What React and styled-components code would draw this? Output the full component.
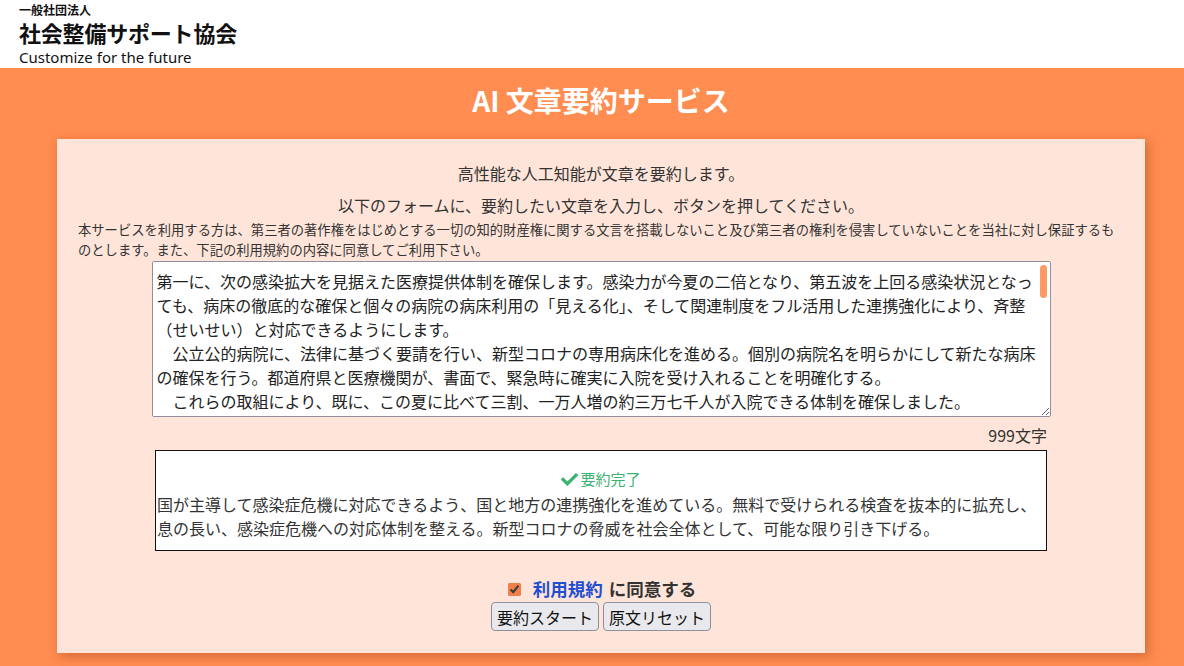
import React from "react";
import styled, { createGlobalStyle } from "styled-components";
import { FaCheck } from "react-icons/fa";

const Global = createGlobalStyle`
  html, body { margin: 0; padding: 0; }
  body {
    font-family: "Noto Sans CJK JP", "Noto Sans", sans-serif;
    color: #333;
    background: #ff8c50;
  }
  * { box-sizing: border-box; }
`;

const Header = styled.header`
  height: 68px;
  background: #fff;
  padding: 3px 0 0 19px;
  display: flex;
  flex-direction: column;
  color: #111;
`;

const OrgType = styled.div`
  font-size: 12px;
  font-weight: 700;
  line-height: 14px;
`;

const OrgName = styled.div`
  font-size: 22px;
  font-weight: 700;
  line-height: 30px;
  letter-spacing: -0.2px;
`;

const Tagline = styled.div`
  font-family: "Noto Sans", "Noto Sans CJK JP", sans-serif;
  font-size: 15px;
  line-height: 21px;
`;

const Main = styled.main`
  background: #ff8c50;
  min-height: 598px;
  padding: 13px 0 12px 18px;
`;

const Title = styled.h1`
  margin: 0 0 20px;
  text-align: center;
  color: #fff;
  font-size: 28px;
  line-height: 38px;
  font-weight: 700;
`;

const Card = styled.section`
  width: 1088px;
  margin: 0 auto;
  background: #ffe5d9;
  box-shadow: 3px 3px 10px rgba(120, 40, 0, 0.35);
  padding: 22px 21px 22px;
  display: flex;
  flex-direction: column;
  align-items: center;
`;

const Lead = styled.p`
  margin: ${(p) => p.$mt || 0}px 0 0;
  font-size: 16px;
  line-height: 24px;
  text-align: center;
  color: #333;
`;

const Notice = styled.p`
  margin: 3px 0 0;
  align-self: stretch;
  font-size: 13.3px;
  line-height: 20px;
  color: #333;
`;

const AreaWrap = styled.div`
  position: relative;
  margin-top: 1px;
  width: 899px;
  height: 156px;
`;

const TextArea = styled.textarea`
  display: block;
  width: 100%;
  height: 100%;
  border: 1px solid #8f8f9d;
  border-radius: 2px;
  background: #fff;
  padding: 7px 12px 0 4px;
  font-family: "Noto Sans CJK JP", sans-serif;
  font-size: 16px;
  line-height: 24px;
  color: #222;
  resize: vertical;
  overflow-y: auto;
`;

const Thumb = styled.span`
  position: absolute;
  top: 4px;
  right: 4px;
  width: 7px;
  height: 33px;
  border-radius: 4px;
  background: #ff9a66;
  pointer-events: none;
`;

const Counter = styled.div`
  margin-top: 8px;
  width: 892px;
  text-align: right;
  font-size: 16px;
  line-height: 20px;
  color: #333;
`;

const ResultBox = styled.div`
  margin-top: 5px;
  width: 892px;
  height: 101px;
  border: 1px solid #111;
  background: #fff;
  padding: 15px 1px 0;
  font-size: 16px;
  line-height: 24px;
  color: #333;
`;

const Done = styled.div`
  display: flex;
  justify-content: center;
  align-items: center;
  gap: 2px;
  color: #3cb371;
  font-size: 15px;
  line-height: 26px;
  svg { width: 17px; height: 17px; }
`;

const AgreeRow = styled.label`
  margin-top: 26px;
  display: flex;
  align-items: center;
  gap: 6px;
  font-size: 17.5px;
  font-weight: 700;
  line-height: 24px;
  color: #333;
`;

const Check = styled.input`
  width: 13px;
  height: 13px;
  margin: 0 6px 0 2px;
  accent-color: #f08048;
`;

const TermsLink = styled.a`
  color: #1f4fd1;
  text-decoration: none;
`;

const Buttons = styled.div`
  margin-top: 1px;
  display: flex;
  gap: 4px;
`;

const Button = styled.button`
  height: 29px;
  padding: 0 5px;
  font-family: "Noto Sans CJK JP", sans-serif;
  font-size: 16px;
  color: #111;
  background: #e9e9ed;
  border: 1px solid #8f8f9d;
  border-radius: 4px;
`;

const original = `第一に、次の感染拡大を見据えた医療提供体制を確保します。感染力が今夏の二倍となり、第五波を上回る感染状況となっても、病床の徹底的な確保と個々の病院の病床利用の「見える化」、そして関連制度をフル活用した連携強化により、斉整（せいせい）と対応できるようにします。
　公立公的病院に、法律に基づく要請を行い、新型コロナの専用病床化を進める。個別の病院名を明らかにして新たな病床の確保を行う。都道府県と医療機関が、書面で、緊急時に確実に入院を受け入れることを明確化する。
　これらの取組により、既に、この夏に比べて三割、一万人増の約三万七千人が入院できる体制を確保しました。
　第二に、新型コロナの脅威を社会全体として、可能な限り引き下げます。そのため、検査、飲める治療薬の普及により、予防、発見から早期治療までの流れを更に強化します。
　三回目のワクチン接種については、十二月から医療従事者、高齢者等を対象に開始します。ワクチン接種証明のデジタル化を年内に実現します。
　無料で受けられる検査を抜本的に拡充します。感染拡大時には、感染不安のある方が、無料で検査を受けられるようにします。
　年内に飲める治療薬を確保することを目指します。軽症者向けの飲み薬を、身近な医療機関で処方できる体制を整えます。
　第三に、感染症危機に強い国づくりを進めます。国が主導して感染症危機に対応できるよう、国と地方の連携強化を進めます。息の長い、感染症危機への対応体制を整えます。
　これらを取りまとめ、司令塔機能の強化を含めた、感染症危機への対応体制を整えてまいります。`;

const summary =
  "国が主導して感染症危機に対応できるよう、国と地方の連携強化を進めている。無料で受けられる検査を抜本的に拡充し、息の長い、感染症危機への対応体制を整える。新型コロナの脅威を社会全体として、可能な限り引き下げる。";

export default function App() {
  return (
    <>
      <Global />
      <Header>
        <OrgType>一般社団法人</OrgType>
        <OrgName>社会整備サポート協会</OrgName>
        <Tagline>Customize for the future</Tagline>
      </Header>
      <Main>
        <Title>AI 文章要約サービス</Title>
        <Card>
          <Lead>高性能な人工知能が文章を要約します。</Lead>
          <Lead $mt={8}>以下のフォームに、要約したい文章を入力し、ボタンを押してください。</Lead>
          <Notice>
            本サービスを利用する方は、第三者の著作権をはじめとする一切の知的財産権に関する文言を搭載しないこと及び第三者の権利を侵害していないことを当社に対し保証するものとします。また、下記の利用規約の内容に同意してご利用下さい。
          </Notice>
          <AreaWrap>
            <TextArea defaultValue={original} />
            <Thumb />
          </AreaWrap>
          <Counter>999文字</Counter>
          <ResultBox>
            <Done>
              <FaCheck />
              要約完了
            </Done>
            {summary}
          </ResultBox>
          <AgreeRow>
            <Check type="checkbox" defaultChecked />
            <TermsLink href="#">利用規約</TermsLink>
            <span>に同意する</span>
          </AgreeRow>
          <Buttons>
            <Button>要約スタート</Button>
            <Button>原文リセット</Button>
          </Buttons>
        </Card>
      </Main>
    </>
  );
}
